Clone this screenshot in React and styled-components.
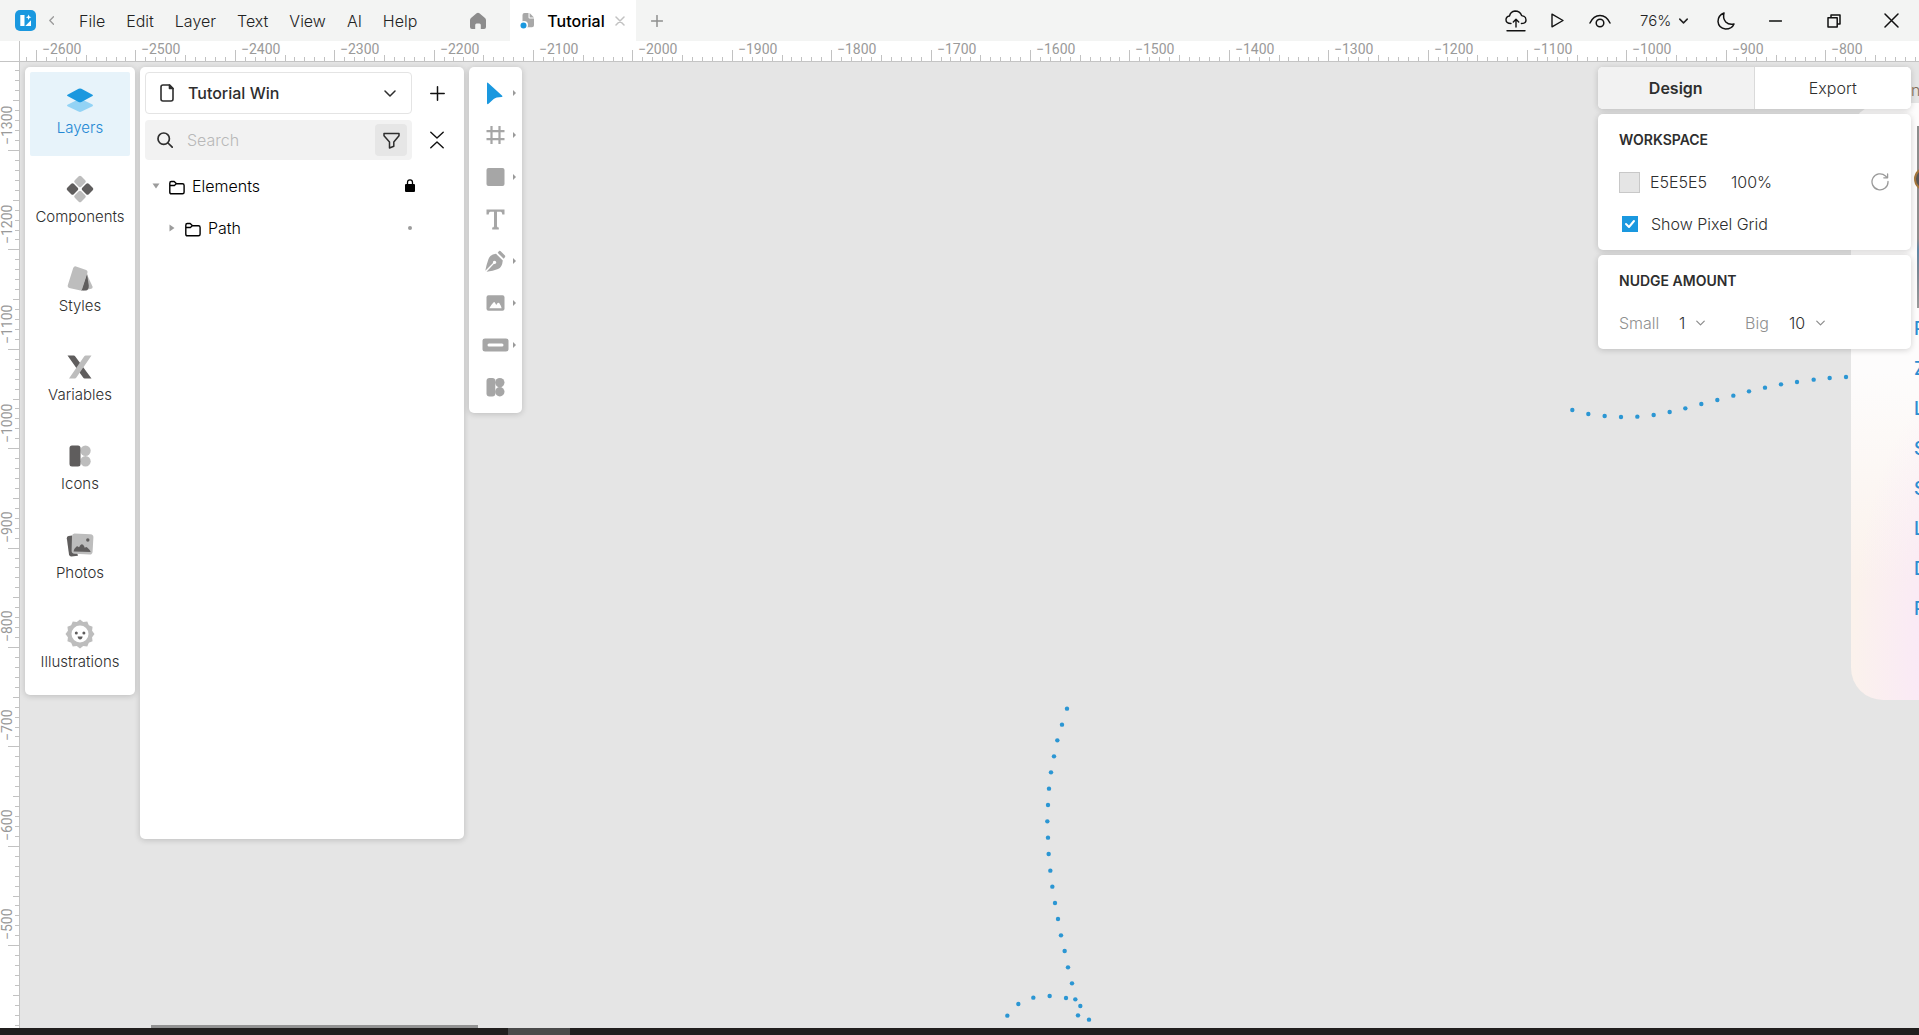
import React from "react";
import styled, { createGlobalStyle, css } from "styled-components";

const GlobalStyle = createGlobalStyle`
  *, *::before, *::after { box-sizing: border-box; }
  body {
    margin: 0;
    overflow: hidden;
    font-family: Inter, "Liberation Sans", sans-serif;
    font-size: 16px;
    font-weight: 300;
    color: #2e2e2e;
  }
  button, input, select {
    margin: 0;
    padding: 0;
    border: 0;
    background: none;
    font: inherit;
    color: inherit;
    outline: none;
  }
  svg { display: block; flex: none; }
  h2 { margin: 0; }
`;

const Shell = styled.div`
  display: grid;
  grid-template-rows: 41px minmax(0, 1fr) 7px;
  height: 100vh;
`;

/* ---------- title bar ---------- */

const TitleBar = styled.header`
  display: flex;
  align-items: center;
  justify-content: space-between;
  padding-left: 15px;
  background: #f3f4f3;
`;

const BarGroup = styled.div`
  display: flex;
  align-items: center;
  height: 100%;
`;

const BarButton = styled.button`
  display: grid;
  place-items: center;
  width: ${(p) => p.$width}px;
  height: 40px;
  color: ${(p) => p.$tone || "#111"};
`;

const Menu = styled.nav`
  display: flex;
  gap: 21px;
  margin-left: 13px;
`;

const MenuButton = styled.button`
  line-height: 40px;
  color: #222;
`;

const HomeButton = styled(BarButton)`
  margin-left: 30px;
`;

const FileTab = styled.div`
  display: flex;
  align-items: center;
  height: 100%;
  padding: 0 1px 0 10px;
  margin-left: 1px;
  background: #fff;
`;

const TabTitle = styled.button`
  display: flex;
  align-items: center;
  gap: 12px;
  font-weight: 500;
  line-height: 40px;
  color: #000;
`;

const ZoomField = styled.label`
  position: relative;
  display: flex;
  align-items: center;
  gap: 7px;
  margin-left: 18px;
  margin-right: 19px;
  font-size: 15px;
`;

const PlainSelect = styled.select`
  appearance: none;
  line-height: 24px;
  color: ${(p) => p.$tone || "#2e2e2e"};
`;

/* ---------- rulers and canvas ---------- */

const Workspace = styled.main`
  display: grid;
  grid-template: 21px minmax(0, 1fr) / 20px minmax(0, 1fr);
  min-height: 0;
  background: #fff;
`;

const RulerCorner = styled.div`
  border-right: 1px solid #c4c4c4;
  border-bottom: 1px solid #c4c4c4;
`;

const RulerTrack = styled.div`
  overflow: hidden;
  ${(p) =>
    p.$vertical
      ? css`border-right: 1px solid #c4c4c4;`
      : css`border-bottom: 1px solid #c4c4c4;`}

  text {
    font-family: Roboto, sans-serif;
    font-size: 14px;
    font-weight: 400;
    fill: #9a9a9a;
  }
`;

const Canvas = styled.section`
  position: relative;
  overflow: hidden;
  background: #e5e5e5;
`;

const PathLayer = styled.svg`
  position: absolute;
  top: 0;
  left: 0;
`;

const Artboard = styled.div`
  position: absolute;
  top: 41px;
  left: 1831px;
  width: 400px;
  height: 597px;
  padding: 210px 0 0 63px;
  border-radius: 32px;
  background:
    radial-gradient(110px 280px at 110px 560px, #f9e4fc, rgba(249, 228, 252, 0)),
    linear-gradient(#fdfcfc 45%, #fbf2ec 80%);
`;

const ArtboardTitle = styled.span`
  position: absolute;
  top: 18px;
  left: 1891px;
  line-height: 20px;
  color: #84705a;
`;

const ArtboardPicture = styled.div`
  position: absolute;
  top: 23px;
  left: 66px;
  width: 300px;
  height: 182px;
  background: linear-gradient(#8d8d8d 0 62%, #5f87a5 68%, #7b8794 80%, #999 100%);
`;

const ArtboardAvatar = styled.div`
  position: absolute;
  top: 64px;
  left: 63px;
  width: 24px;
  height: 24px;
  border: 2px solid #a5763c;
  border-radius: 12px;
  background: #555;
`;

const ArtboardLink = styled.div`
  height: 40px;
  font-size: 18px;
  font-weight: 500;
  line-height: 32px;
  color: #2c8ed2;
`;

const ScrollThumb = styled.div`
  position: absolute;
  bottom: 0;
  left: 131px;
  width: 327px;
  height: 3px;
  background: #929292;
`;

const Taskbar = styled.footer`
  display: flex;
  justify-content: flex-start;
  padding-left: 508px;
  background: #211f1e;
`;

const TaskbarItem = styled.div`
  width: 62px;
  background: #4a4a4a;
`;

/* ---------- floating panels ---------- */

const PanelDeck = styled.div`
  position: relative;
  display: flex;
  align-items: flex-start;
  gap: 5px;
  height: 100%;
  padding: 5px 8px 0 5px;
`;

const Panel = styled.div`
  border-radius: 5px;
  background: #fff;
  box-shadow: 0 1px 6px rgba(0, 0, 0, 0.18);
`;

const SideNav = styled(Panel).attrs({ as: "nav" })`
  display: flex;
  flex-direction: column;
  gap: 5px;
  width: 110px;
  padding: 5px;
`;

const NavButton = styled.button`
  display: flex;
  flex-direction: column;
  align-items: center;
  gap: 4px;
  height: 84px;
  padding-top: 14px;
  border-radius: 2px;
  font-size: 15px;
  line-height: 20px;
  color: ${(p) => (p.$active ? "#2388d4" : "#2e2e2e")};
  background: ${(p) => (p.$active ? "#e7f3fa" : "transparent")};
`;

const LayersPanel = styled(Panel)`
  width: 324px;
  height: 772px;
  padding: 5px;
`;

const PanelRow = styled.div`
  display: flex;
  align-items: center;
  gap: 4px;
  margin-bottom: ${(p) => p.$below}px;
`;

const PagePicker = styled.label`
  display: flex;
  align-items: center;
  width: 267px;
  height: 42px;
  padding: 0 15px 0 14px;
  border: 1px solid #e4e4e4;
  border-radius: 4px;
`;

const PageSelect = styled(PlainSelect)`
  flex: 1;
  margin-left: 14px;
  font-weight: 500;
`;

const SearchBox = styled.label`
  display: flex;
  align-items: center;
  width: 267px;
  height: 40px;
  padding: 0 5px 0 12px;
  border-radius: 4px;
  background: #f2f2f2;
`;

const SearchInput = styled.input`
  flex: 1;
  min-width: 0;
  margin-left: 14px;

  &::placeholder {
    color: #b8b8b8;
    opacity: 1;
  }
`;

const FilterButton = styled.button`
  display: grid;
  place-items: center;
  width: 32px;
  height: 32px;
  border-radius: 4px;
  background: #e6e6e6;
`;

const SquareButton = styled.button`
  display: grid;
  place-items: center;
  width: 42px;
  height: 40px;
  color: #111;
`;

const LayerTree = styled.ul`
  margin: 5px 0 0;
  padding: 0;
  list-style: none;
`;

const LayerRow = styled.li`
  display: flex;
  align-items: center;
  height: 42px;
  padding-left: ${(p) => p.$depth * 16 + 6}px;
  padding-right: 41px;
  color: #000;
`;

const LayerName = styled.span`
  flex: 1;
  margin-left: 7px;
`;

const Disclosure = styled.button`
  display: grid;
  place-items: center;
  width: 10px;
  height: 20px;
  margin-right: 8px;
`;

const RowMark = styled.button`
  display: grid;
  place-items: center;
  width: 17px;
  height: 20px;
`;

const Toolbar = styled(Panel)`
  display: flex;
  flex-direction: column;
  width: 53px;
  padding: 5px 0;
`;

const ToolButton = styled.button`
  display: grid;
  grid-template-columns: 30px 9px;
  align-items: center;
  justify-items: center;
  height: 42px;
  padding-left: 11px;
  color: ${(p) => (p.$active ? "#1a98df" : "#a6a6a6")};
`;

const Inspector = styled.aside`
  display: flex;
  flex-direction: column;
  gap: 5px;
  width: 313px;
  margin-left: auto;
`;

const TabStrip = styled(Panel)`
  display: grid;
  grid-template-columns: 1fr 1fr;
  height: 42px;
  overflow: hidden;
`;

const InspectorTab = styled.button`
  font-weight: ${(p) => (p.$active ? 600 : 300)};
  background: ${(p) => (p.$active ? "#f2f2f2" : "#fff")};
  border-right: ${(p) => (p.$active ? "1px solid #dadada" : "0")};
`;

const Section = styled(Panel)`
  padding: 5px 20px 5px 21px;
`;

const SectionTitle = styled.h2`
  font-size: 14px;
  font-weight: 600;
  line-height: 42px;
`;

const Field = styled.div`
  display: flex;
  align-items: center;
  height: 42px;
`;

const Swatch = styled.button`
  width: 21px;
  height: 21px;
  margin-right: 10px;
  border: 1px solid #c8c8c8;
  background: #e5e5e5;
`;

const ValueInput = styled.input`
  width: ${(p) => p.$width}px;
  & + & { flex: 1; }
`;

const FieldButton = styled.button`
  display: grid;
  place-items: center;
  width: 22px;
  height: 22px;
`;

const CheckLabel = styled.label`
  display: grid;
  grid-template-columns: 16px auto;
  align-items: center;
  column-gap: 13px;
  margin-left: 3px;

  input, svg { grid-area: 1 / 1; }
  svg { z-index: 1; pointer-events: none; }
`;

const CheckBox = styled.input`
  appearance: none;
  width: 16px;
  height: 16px;
  background: #1a98df;
`;

const NudgeField = styled.label`
  display: flex;
  align-items: center;
  width: 126px;
  color: #8f8f8f;
`;

const NudgeName = styled.span`
  width: ${(p) => p.$width}px;
`;

const NudgeSelect = styled(PlainSelect)`
  margin-right: 10px;
`;

/* ---------- icons ---------- */

const Stroke = ({ w = 20, h = w, sw = 1.5, box, children, ...rest }) => (
  <svg
    width={w}
    height={h}
    viewBox={box || `0 0 ${w} ${h}`}
    fill="none"
    stroke="currentColor"
    strokeWidth={sw}
    strokeLinecap="round"
    strokeLinejoin="round"
    aria-hidden="true"
    {...rest}
  >
    {children}
  </svg>
);

const Logo = () => (
  <svg width="21" height="21" viewBox="0 0 21 21" aria-hidden="true">
    <rect width="21" height="21" rx="5" fill="#1a98df" />
    <path d="M5.300 5h4.200v11H5.300z" fill="#fff" />
    <path d="M10.300 16l5.700-5.700V16z" fill="#fff" />
    <path d="M13.600 4.500l.8 2 2 .8-2 .8-.8 2-.8-2-2-.8 2-.8z" fill="#fff" />
  </svg>
);

const Chevron = ({ w = 12, h = 7, sw = 1.5, tone }) => (
  <Stroke w={w} h={h} sw={sw} box="0 0 12 7" color={tone}>
    <path d="M1 1l5 5 5-5" />
  </Stroke>
);

const navIcons = {
  Layers: (
    <>
      <path d="M14 12.500L26.500 18.500Q27.600 19.500 26.500 20.200L15.500 25.600Q14 26.300 12.500 25.600L1.500 20.200Q.4 19.500 1.500 18.800z" fill="#93d3f5" />
      <path d="M12.600 2.800Q14 2 15.400 2.800L26.500 8.700Q27.500 9.400 26.500 10.100L15.400 16Q14 16.700 12.600 16L1.500 10.100Q.5 9.400 1.500 8.700z" fill="#1a98df" />
    </>
  ),
  Components: (
    <>
      {[
        [14, 6.5, "#bdbdbd"],
        [6.5, 14, "#5f5d5d"],
        [21.5, 14, "#5f5d5d"],
        [14, 21.5, "#bdbdbd"],
      ].map(([x, y, c]) => (
        <rect key={`${x}-${y}`} x={x - 4.6} y={y - 4.6} width="9.200" height="9.200" rx="1.800" fill={c} transform={`rotate(45 ${x} ${y})`} />
      ))}
    </>
  ),
  Styles: (
    <>
      <path d="M20.500 9.500l6 13q.6 1.800-1.200 2.300L17 26.500z" fill="#bdbdbd" />
      <path d="M21 9.500l1.800 12.200q.1 3.800-2.600 4.800H15z" fill="#5f5d5d" />
      <path d="M10 2.400L20.200 6q1.700.8 1.300 2.600L16.300 24.800q-.8 2-2.800 1.500L3.200 24q-1.900-.7-1.500-2.600L7.200 4Q8 2 10 2.400z" fill="#bdbdbd" />
    </>
  ),
  Variables: (
    <>
      <path d="M1.500 2.500h6.200q1 0 1.600.9L25.500 25.500h-6.800q-1 0-1.600-.9z" fill="#5f5d5d" />
      <path d="M25.500 2.500h-5.700q-1 0-1.700.9L3 25.500h5.800q1 0 1.600-.9z" fill="#bdbdbd" />
    </>
  ),
  Icons: (
    <>
      <circle cx="19.500" cy="8.800" r="5.200" fill="#bdbdbd" />
      <circle cx="19.500" cy="19.200" r="5.200" fill="#bdbdbd" />
      <rect x="3.500" y="3.500" width="11" height="21" rx="2.500" fill="#5f5d5d" />
    </>
  ),
  Photos: (
    <>
      <path d="M6 4.500L2.500 5Q.6 5.400.8 7.300L3 23.500q.5 2 2.400 1.900L12 24.700z" fill="#5f5d5d" />
      <path d="M8.500 2.500l16 .8q3 .3 2.900 3l-.8 14.500q-.3 3-3 2.800L8.500 22.800q-3-.3-2.900-3L6 5q.2-2.500 2.500-2.500z" fill="#bdbdbd" />
      <path d="M7.500 20.500q1-3.500 3-5 1.200-.6 1.800.3.900 1.200 1.600-1 1.500-2.600 3.200-1 1.200 1.300 1.800 3.200 1-1.800 2.300-.6 2.500 2 3.500 4.600z" fill="#5f5d5d" />
      <circle cx="21.800" cy="9" r="1.700" fill="#5f5d5d" />
    </>
  ),
  Illustrations: (
    <>
      <path
        d={
          Array.from({ length: 24 }, (_, i) => {
            const r = i % 2 ? 12.5 : 14.5;
            const a = (i * Math.PI) / 12 - Math.PI / 2;
            return `${i ? "L" : "M"}${(14 + r * Math.cos(a)).toFixed(2)} ${(14 + r * Math.sin(a)).toFixed(2)}`;
          }).join("") + "z"
        }
        fill="#bdbdbd"
      />
      <circle cx="14" cy="14" r="8.500" fill="#fff" />
      <circle cx="10.300" cy="13" r="1.500" fill="#5f5d5d" />
      <circle cx="17.900" cy="13" r="1.500" fill="#5f5d5d" />
      <path d="M11.600 16.500h5q-.4 3-2.500 3t-2.500-3z" fill="#5f5d5d" />
    </>
  ),
};

const toolIcons = {
  Select: <path d="M5 3.500q0-1.500 1.200-.5L20.200 15.800q.9 1-.5 1.100-5.800.2-8 2L6.800 23.500Q5 25 5 23z" />,
  Frame: (
    <path d="M9.500 4v18M17.500 4v18M4.500 9.200h18M4.500 17.200h18" fill="none" stroke="currentColor" strokeWidth="2.200" />
  ),
  Rectangle: <rect x="4.500" y="4" width="18" height="18" rx="2" />,
  Text: <path d="M4.500 3.500h18v5h-2.200q0-2.700-1.600-2.700H15v14.500q0 1.200 1.800 1.200v2h-6.600v-2q1.800 0 1.800-1.200V5.800H8.300q-1.600 0-1.600 2.700H4.500z" />,
  Pen: (
    <>
      <path d="M16.500 3.800q.8-1.800 2.200-.6l4 4q1.200 1.200 0 2.200l-1 1.400-6-6z" />
      <path d="M14 5.800l6.800 6.600q-.7 7-4.800 8.600-5 2-11.500 2.800L11.800 16q1.800.4 2.400-1.200.3-2-1.800-2-1.900.4-1.400 2.300L3.300 22.800Q4.500 16.500 6.500 11 8 6.500 14 5.800z" />
    </>
  ),
  Image: (
    <path
      fillRule="evenodd"
      d="M6.500 5.300h14q2 0 2 2v11.400q0 2-2 2h-14q-2 0-2-2V7.300q0-2 2-2zM7.300 18.300h12.300q-.4-2.300-2.400-5.200-.8-.8-1.600 0l-1.400 1.800-1.300-2.400q-.8-.8-1.500 0Q9 15 7.300 18.300z"
    />
  ),
  Button: (
    <path
      fillRule="evenodd"
      d="M3 6.500h21q2.500 0 2.500 2v9q0 2-2.500 2H3q-2.500 0-2.500-2v-9q0-2 2.500-2zM7 11.500q-1.500 0-1.500 1.500T7 14.500h13q1.500 0 1.500-1.500T20 11.500z"
    />
  ),
  Icons: (
    <>
      <rect x="4.500" y="4" width="8.800" height="18.400" rx="3" />
      <circle cx="17.800" cy="8.600" r="4.700" />
      <circle cx="17.800" cy="17.700" r="4.700" />
    </>
  ),
};

const FolderIcon = () => (
  <Stroke w={16} h={17} sw={1.4}>
    <path d="M.8 5.200Q.8 3.500 2.300 3.500h2.900l2.300 2.300h6q1.600 0 1.600 1.700v6.800q0 1.500-1.600 1.500H2.300Q.8 15.800.8 14.300zM.8 7.500h4.600l1.900-1.700" />
  </Stroke>
);

/* ---------- data ---------- */

const RULER_STEP = 99.4;

const arc = (ox, oy, points) => points.map(([x, y]) => [ox + x / 3, oy + y / 3]);

const pathDots = [
  ...arc(1520, 278, [
    [97, 210], [145, 222], [194, 228], [243, 231], [292, 230], [341, 225], [389, 216], [436, 205], [484, 192],
    [532, 180], [580, 167], [627, 154], [675, 143], [723, 133], [771, 126], [821, 119], [869, 114], [918, 111],
  ]),
  ...arc(960, 628, [
    [261, 56], [246, 104], [232, 151], [222, 199], [213, 247], [207, 296], [204, 345], [202, 394], [204, 443],
    [206, 492], [211, 542], [217, 590], [225, 639], [234, 687], [243, 736], [254, 783], [264, 832], [276, 880],
    [286, 928], [301, 948], [294, 976], [327, 989], [258, 924], [209, 918], [160, 923], [115, 942], [82, 977],
  ]),
];

const artboardLinks = ["P", "Z", "L", "S", "S", "L", "D", "P"];

/* ---------- parts ---------- */

function Ruler({ vertical, first, origin, count }) {
  const marks = [];
  for (let i = -9; i < count * 10; i += 1) {
    const at = Math.round(origin + (i * RULER_STEP) / 10) + 0.5;
    const long = i % 10 === 0;
    const size = long ? 11 : i % 5 === 0 ? 6 : 4;
    marks.push(
      vertical
        ? `M${19 - size} ${at}H19`
        : `M${at} ${20 - size}V20`
    );
  }
  const labels = Array.from({ length: count }, (_, i) => ({
    text: `\u2212${first - i * 100}`,
    at: Math.round(origin + i * RULER_STEP),
  }));
  return (
    <RulerTrack $vertical={vertical}>
      <svg width={vertical ? 19 : 1900} height={vertical ? 966 : 20} aria-label="Ruler">
        <path d={marks.join("")} stroke="#c2c2c2" fill="none" />
        {labels.map((l) =>
          vertical ? (
            <text key={l.text} transform={`translate(12 ${l.at - 5}) rotate(-90)`}>{l.text}</text>
          ) : (
            <text key={l.text} x={l.at + 6} y="13">{l.text}</text>
          )
        )}
      </svg>
    </RulerTrack>
  );
}

function WindowBar() {
  return (
    <TitleBar>
      <BarGroup>
        <Logo />
        <BarButton $width={30} $tone="#9a9a9a" aria-label="Back">
          <Stroke w={5} h={9} sw={1.3}><path d="M4.500.8L.8 4.500l3.700 3.700" /></Stroke>
        </BarButton>
        <Menu>
          {["File", "Edit", "Layer", "Text", "View", "AI", "Help"].map((m) => (
            <MenuButton key={m}>{m}</MenuButton>
          ))}
        </Menu>
        <HomeButton $width={62} $tone="#8c8c8c" aria-label="Home">
          <svg width="18" height="18" viewBox="0 0 18 18" fill="currentColor" aria-hidden="true">
            <path d="M7.600 1.300Q9 .3 10.400 1.300L16 6q1 1 1 2.200V15q0 2-2 2h-3.200v-4q0-1.600-1.400-1.600H7.600q-1.400 0-1.400 1.600v4H3q-2 0-2-2V8.200Q1 7 2 6z" />
          </svg>
        </HomeButton>
        <FileTab>
          <TabTitle>
            <svg width="15" height="17" viewBox="0 0 15 17" aria-hidden="true">
              <path d="M4.500 1h4v4.500q0 1 1 1H14v6.800q0 2-2 2H2.500V3q0-2 2-2z" fill="#a8a8a8" />
              <path d="M9.600 1L14 5.400H9.600z" fill="#a8a8a8" />
              <circle cx="4" cy="13" r="4" fill="#fff" />
              <circle cx="3.500" cy="13.500" r="3" fill="#1a98df" />
            </svg>
            Tutorial
          </TabTitle>
          <BarButton $width={30} $tone="#c2c2c2" aria-label="Close tab">
            <Stroke w={10} sw={1.5}><path d="M1 1l8 8M9 1L1 9" /></Stroke>
          </BarButton>
        </FileTab>
        <BarButton $width={42} $tone="#8f8f8f" aria-label="New tab">
          <Stroke w={12} sw={1.5}><path d="M6 .5v11M.5 6h11" /></Stroke>
        </BarButton>
      </BarGroup>
      <BarGroup>
        <BarButton $width={40} aria-label="Upload">
          <Stroke w={22} sw={1.4}>
            <path d="M6 13.500Q1 13.500 1 9.800 1 6.500 4.500 6 5.500 1.500 10 1q5 0 6.600 4.600 4.400.5 4.400 4.300 0 3.600-4.600 3.600M11 17V9.500M8.300 12L11 9.300l2.700 2.700M2 20.800h18" />
          </Stroke>
        </BarButton>
        <BarButton $width={42} aria-label="Preview">
          <Stroke w={13} h={15} sw={1.4}><path d="M1 1.200v12.600l11-6.300z" /></Stroke>
        </BarButton>
        <BarButton $width={44} aria-label="View options">
          <Stroke w={22} h={14} sw={1.5}>
            <path d="M1 9Q4.500 1.500 11 1.500T21 9" />
            <circle cx="11" cy="9" r="3.800" />
          </Stroke>
        </BarButton>
        <ZoomField>
          <PlainSelect aria-label="Zoom" $tone="#222"><option>76%</option></PlainSelect>
          <Chevron w={9} h={6} sw={2} tone="#222" />
        </ZoomField>
        <BarButton $width={38} aria-label="Dark mode">
          <Stroke w={18} sw={1.5}><path d="M7 1Q1 3.500 1 9.500 1.500 16 8.500 17q6.500 0 8.500-5-5 1.200-8.200-2Q5.500 6 7 1z" /></Stroke>
        </BarButton>
        <BarButton $width={60} aria-label="Minimize">
          <Stroke w={13} h={2} sw={1.5}><path d="M.5 1h12" /></Stroke>
        </BarButton>
        <BarButton $width={58} aria-label="Restore">
          <Stroke w={14} sw={1.5}><path d="M1 3.800h9.200V13H1zM4 3.500V1h9v9h-2.500" /></Stroke>
        </BarButton>
        <BarButton $width={56} aria-label="Close">
          <Stroke w={15} sw={1.5}><path d="M1 1l13 13M14 1L1 14" /></Stroke>
        </BarButton>
      </BarGroup>
    </TitleBar>
  );
}

function LayerTreePanel() {
  return (
    <LayersPanel>
      <PanelRow $below={6}>
        <PagePicker>
          <Stroke w={14} h={18} sw={1.6}>
            <path d="M3 1h6.500L13 4.500V15q0 2-2 2H3q-2 0-2-2V3q0-2 2-2z" />
            <path d="M9.500 1v3.500H13z" fill="currentColor" />
          </Stroke>
          <PageSelect aria-label="Page"><option>Tutorial Win</option></PageSelect>
          <Chevron />
        </PagePicker>
        <SquareButton aria-label="Add page">
          <Stroke w={15} sw={1.5}><path d="M7.500.8v13.400M.8 7.500h13.400" /></Stroke>
        </SquareButton>
      </PanelRow>
      <PanelRow $below={0}>
        <SearchBox>
          <Stroke w={16} sw={1.7}>
            <circle cx="6.700" cy="6.700" r="5.700" />
            <path d="M11 11l4.200 4.200" />
          </Stroke>
          <SearchInput type="search" placeholder="Search" aria-label="Search layers" />
          <FilterButton aria-label="Filter">
            <Stroke w={17} sw={1.5}><path d="M1 1.500h15v2.300L10.800 10v4.200L6.500 16v-6L1 3.800z" /></Stroke>
          </FilterButton>
        </SearchBox>
        <SquareButton aria-label="Collapse all">
          <Stroke w={14} h={18} sw={1.4}><path d="M.8 1.200L7 7l6.200-5.800M.8 16.800L7 11l6.200 5.800" /></Stroke>
        </SquareButton>
      </PanelRow>
      <LayerTree>
        <LayerRow $depth={0}>
          <Disclosure aria-label="Collapse Elements">
            <svg width="8" height="6" fill="#9c9c9c" aria-hidden="true"><path d="M.5.5h7L4 5.500z" /></svg>
          </Disclosure>
          <FolderIcon />
          <LayerName>Elements</LayerName>
          <RowMark aria-label="Unlock">
            <svg width="10" height="14" aria-hidden="true">
              <path d="M2.500 6.500v-3q0-2.700 2.500-2.700t2.500 2.700v3" fill="none" stroke="#000" strokeWidth="1.300" />
              <rect y="5" width="10" height="8" rx="1" />
            </svg>
          </RowMark>
        </LayerRow>
        <LayerRow $depth={1}>
          <Disclosure aria-label="Expand Path">
            <svg width="6" height="8" fill="#9c9c9c" aria-hidden="true"><path d="M.5.5v7L5.500 4z" /></svg>
          </Disclosure>
          <FolderIcon />
          <LayerName>Path</LayerName>
          <RowMark aria-label="Lock">
            <svg width="4" height="4" fill="#9c9c9c" aria-hidden="true"><circle cx="2" cy="2" r="2" /></svg>
          </RowMark>
        </LayerRow>
      </LayerTree>
    </LayersPanel>
  );
}

function InspectorPanels() {
  return (
    <Inspector>
      <TabStrip>
        <InspectorTab $active>Design</InspectorTab>
        <InspectorTab>Export</InspectorTab>
      </TabStrip>
      <Section>
        <SectionTitle>WORKSPACE</SectionTitle>
        <Field>
          <Swatch aria-label="Workspace colour" />
          <ValueInput $width={81} defaultValue="E5E5E5" aria-label="Colour" />
          <ValueInput $width={60} defaultValue="100%" aria-label="Opacity" />
          <FieldButton aria-label="Reset">
            <Stroke w={18} sw={1.3} color="#9a9a9a">
              <path d="M17 8.500A8 8 0 1 1 14.500 3l1.500 1.500M16.600 1v3.800h-3.800" />
            </Stroke>
          </FieldButton>
        </Field>
        <Field>
          <CheckLabel>
            <CheckBox type="checkbox" defaultChecked />
            <Stroke w={16} sw={2} color="#fff"><path d="M4 8l3 3 5-6" /></Stroke>
            Show Pixel Grid
          </CheckLabel>
        </Field>
      </Section>
      <Section>
        <SectionTitle>NUDGE AMOUNT</SectionTitle>
        <Field>
          <NudgeField>
            <NudgeName $width={60}>Small</NudgeName>
            <NudgeSelect><option>1</option></NudgeSelect>
            <Chevron w={9} h={6} sw={1.6} tone="#8c8c8c" />
          </NudgeField>
          <NudgeField>
            <NudgeName $width={44}>Big</NudgeName>
            <NudgeSelect><option>10</option></NudgeSelect>
            <Chevron w={9} h={6} sw={1.6} tone="#8c8c8c" />
          </NudgeField>
        </Field>
      </Section>
    </Inspector>
  );
}

export default function App() {
  return (
    <>
      <GlobalStyle />
      <Shell>
        <WindowBar />
        <Workspace>
          <RulerCorner />
          <Ruler first={2600} origin={16} count={19} />
          <Ruler vertical first={1300} origin={88} count={9} />
          <Canvas>
            <PathLayer width="1899" height="966" fill="#2b96d3" aria-label="Dotted paths">
              {pathDots.map(([x, y]) => (
                <circle key={`${x}-${y}`} cx={x} cy={y} r="2.200" />
              ))}
            </PathLayer>
            <ArtboardTitle>n</ArtboardTitle>
            <Artboard>
              <ArtboardPicture />
              <ArtboardAvatar />
              {artboardLinks.map((l, i) => (
                <ArtboardLink key={i}>{l}</ArtboardLink>
              ))}
            </Artboard>
            <ScrollThumb />
            <PanelDeck>
              <SideNav>
                {Object.entries(navIcons).map(([name, icon]) => (
                  <NavButton key={name} $active={name === "Layers"}>
                    <svg width="28" height="28" viewBox="0 0 28 28" overflow="visible" aria-hidden="true">{icon}</svg>
                    {name}
                  </NavButton>
                ))}
              </SideNav>
              <LayerTreePanel />
              <Toolbar role="toolbar">
                {Object.entries(toolIcons).map(([name, icon]) => (
                  <ToolButton key={name} $active={name === "Select"} aria-label={name}>
                    <svg width="27" height="26" viewBox="0 0 27 26" fill="currentColor" aria-hidden="true">{icon}</svg>
                    {name !== "Text" && name !== "Icons" && (
                      <svg width="3" height="6" fill="#9a9a9a" aria-hidden="true"><path d="M0 0l3 3-3 3z" /></svg>
                    )}
                  </ToolButton>
                ))}
              </Toolbar>
              <InspectorPanels />
            </PanelDeck>
          </Canvas>
        </Workspace>
        <Taskbar>
          <TaskbarItem />
        </Taskbar>
      </Shell>
    </>
  );
}
